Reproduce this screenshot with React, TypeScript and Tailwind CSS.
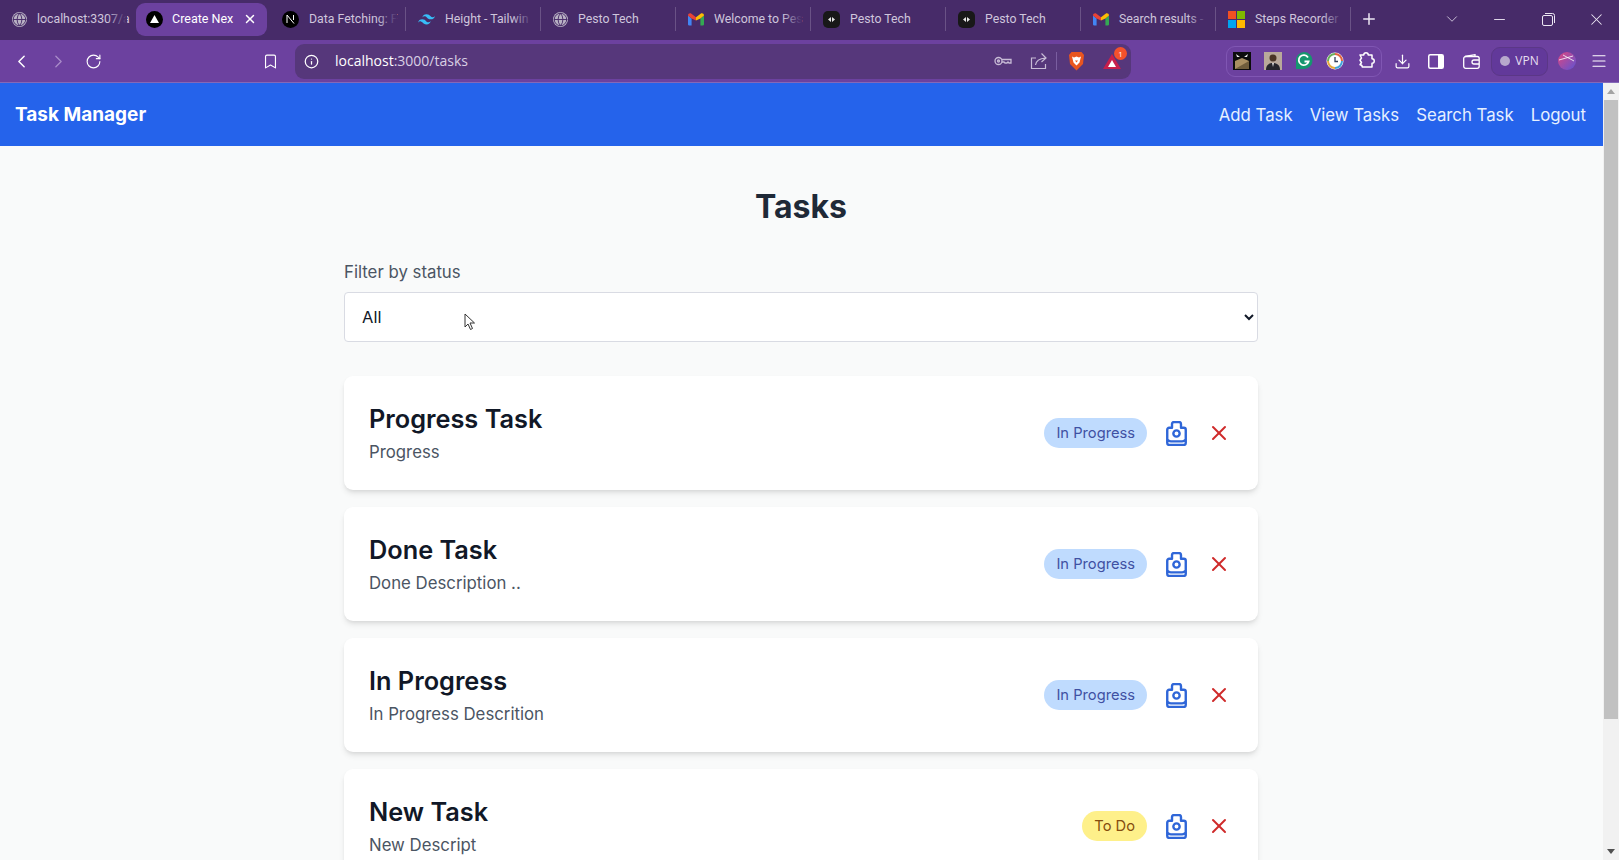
import React from 'react'
import { ChevronLeft, ChevronRight, ChevronDown, RotateCw, Bookmark, Info, X, Plus, Minus, Download, Menu, Globe } from 'lucide-react'

const Gmail = () => (
  <svg width="16" height="13" viewBox="0 0 16 13" className="shrink-0">
    <path d="M0 2.500v9A1.200 1.200 0 0 0 1.200 12.600H3.600V5.600z" fill="#4285f4" />
    <path d="M16 2.500v9a1.200 1.200 0 0 1-1.200 1.100h-2.400V5.600z" fill="#34a853" />
    <path d="M3.600 5.600 0 2.500C0 .6 2 -.4 3.400.7L8 4.200v3.400z" fill="#ea4335" />
    <path d="M12.400 5.600 16 2.500c0-1.900-2-2.900-3.400-1.800L8 4.200v3.400z" fill="#fbbc04" />
  </svg>
)

const Pesto = () => (
  <div className="w-[17px] h-[17px] rounded-[5px] bg-[#181818] flex items-center justify-center shrink-0">
    <svg width="9" height="7" viewBox="0 0 9 7">
      <path d="M4 1 1 3.500 4 6zM5 1l3 2.500L5 6z" fill="#e5e5e5" />
    </svg>
  </div>
)

const Vercel = () => (
  <div className="w-[17px] h-[17px] rounded-full bg-black flex items-center justify-center shrink-0">
    <svg width="9" height="8" viewBox="0 0 9 8"><path d="M4.500 0 9 8H0z" fill="#fff" /></svg>
  </div>
)

const NextLogo = () => (
  <div className="w-[17px] h-[17px] rounded-full bg-black flex items-center justify-center shrink-0">
    <svg width="9" height="10" viewBox="0 0 9 10" fill="none" stroke="#fff" strokeWidth="1"><path d="M1 9V1l7 8.500M7.500 1v5" /></svg>
  </div>
)

const TailwindLogo = () => (
  <svg width="17" height="11" viewBox="0 0 24 15" className="shrink-0">
    <path d="M12 0C8.800 0 6.800 1.600 6 4.800c1.200-1.600 2.600-2.200 4.200-1.800.9.200 1.600.9 2.300 1.600C13.700 5.800 15 7.200 18 7.200c3.200 0 5.200-1.600 6-4.800-1.200 1.600-2.600 2.200-4.200 1.800-.9-.2-1.600-.9-2.300-1.600C16.300 1.400 15 0 12 0zM6 7.200c-3.200 0-5.200 1.600-6 4.800 1.200-1.600 2.600-2.200 4.200-1.800.9.200 1.600.9 2.300 1.600 1.200 1.200 2.500 2.600 5.500 2.600 3.200 0 5.200-1.600 6-4.800-1.200 1.600-2.600 2.200-4.200 1.800-.9-.2-1.600-.9-2.300-1.600C10.300 8.600 9 7.200 6 7.200z" fill="#38bdf8" />
  </svg>
)

const Windows = () => (
  <div className="grid grid-cols-2 gap-px w-[17px] h-[17px] shrink-0">
    <div className="bg-[#f25022]" />
    <div className="bg-[#7fba00]" />
    <div className="bg-[#00a4ef]" />
    <div className="bg-[#ffb900]" />
  </div>
)

const GlobeIcon = () => (
  <div className="w-[15px] h-[15px] rounded-full bg-[#b9b2c4] flex items-center justify-center shrink-0">
    <Globe size={15} className="text-[#472b69]" strokeWidth={1.500} />
  </div>
)

const TABS = [
  { title: 'localhost:3307/a', icon: <GlobeIcon /> },
  { title: 'Create Nex', icon: <Vercel />, active: true },
  { title: 'Data Fetching: F', icon: <NextLogo /> },
  { title: 'Height - Tailwin', icon: <TailwindLogo /> },
  { title: 'Pesto Tech', icon: <GlobeIcon /> },
  { title: 'Welcome to Pes', icon: <Gmail /> },
  { title: 'Pesto Tech', icon: <Pesto /> },
  { title: 'Pesto Tech', icon: <Pesto /> },
  { title: 'Search results -', icon: <Gmail /> },
  { title: 'Steps Recorder', icon: <Windows /> },
]

const TASKS = [
  { title: 'Progress Task', desc: 'Progress', status: 'In Progress' },
  { title: 'Done Task', desc: 'Done Description ..', status: 'In Progress' },
  { title: 'In Progress', desc: 'In Progress Descrition', status: 'In Progress' },
  { title: 'New Task', desc: 'New Descript', status: 'To Do' },
]

function BrowserTabs() {
  return (
    <div className="h-[40px] bg-[#472b69] flex items-center shrink-0 pb-[2px] font-['Roboto',sans-serif]">
      {TABS.map((tab, i) => (
        <div key={i} className="w-[135px] h-full flex items-center">
          {tab.active ? (
            <div className="w-[131px] h-[33px] bg-[#6c419f] rounded-[9px] flex items-center gap-[9px] pl-[10px] pr-[10px] ml-px">
              {tab.icon}
              <span className="text-[12.500px] text-white whitespace-nowrap flex-1">{tab.title}</span>
              <X size={14} strokeWidth={2.500} className="text-white shrink-0" />
            </div>
          ) : (
            <div className={`relative w-full h-[24px] flex items-center gap-[10px] pl-[12px] pr-[10px] ${i === 2 || i === 0 ? '' : 'border-l border-[#6a5286]'}`}>
              {tab.icon}
              <span className="text-[12.300px] text-[#cfc6dc] whitespace-nowrap flex-1">{tab.title}</span>
              <div className="absolute right-[8px] top-0 bottom-0 w-[20px] bg-gradient-to-r from-transparent to-[#472b69]" />
            </div>
          )}
        </div>
      ))}
      <div className="h-[24px] border-l border-[#6a5286] w-[10px]" />
      <Plus size={18} className="text-[#ece7f3]" />
      <div className="ml-auto flex items-center">
        <ChevronDown size={18} strokeWidth={1.300} className="text-[#c9bfd6] mr-[30px]" />
        <Minus size={17} strokeWidth={1.300} className="text-[#ece7f3] mr-[34px]" />
        <svg width="13" height="13" viewBox="0 0 13 13" fill="none" stroke="#ece7f3" className="mr-[32px]">
          <rect x="0.500" y="2.500" width="10" height="10" rx="1.500" />
          <path d="M3 .5h7.500a2 2 0 0 1 2 2V10" />
        </svg>
        <X size={19} strokeWidth={1.300} className="text-[#ece7f3] mr-[13px]" />
      </div>
    </div>
  )
}

function BrowserToolbar() {
  return (
    <div className="h-[43px] bg-[#6c419f] border-b border-[#8468b8] flex items-center shrink-0 pl-[11px] font-['Open_Sans',sans-serif]">
      <ChevronLeft size={21} strokeWidth={1.700} className="text-white" />
      <ChevronRight size={21} strokeWidth={1.500} className="text-[#a98cc9] ml-[16px]" />
      <RotateCw size={17} strokeWidth={1.600} className="text-white ml-[16px]" />
      <Bookmark size={17} strokeWidth={1.600} className="text-white ml-[160px]" />
      <div className="ml-[16px] w-[836px] h-[35px] rounded-[9px] bg-[#56377b] flex items-center pl-[9px] pr-[8px]">
        <Info size={15} className="text-white" />
        <span className="ml-[16px] -mt-[2px] text-[14px] text-[#d9d0e4]"><span className="text-white">localhost</span>:3000/tasks</span>
        <div className="ml-auto flex items-center">
          <svg width="18" height="10" viewBox="0 0 18 10" fill="none" stroke="#c8bcd6" strokeWidth="1.300">
            <circle cx="4.500" cy="5" r="3.500" />
            <circle cx="4.500" cy="5" r="1" />
            <path d="M8 3.500h9v3.500h-2l-1-1-1 1h-2l-1-1H8" />
          </svg>
          <svg width="18" height="18" viewBox="0 0 18 18" fill="none" stroke="#c8bcd6" strokeWidth="1.200" className="ml-[18px]">
            <path d="M6 6H1.500v10.500h14V12" />
            <path d="M5.500 13C6 9 9 6.500 15.500 6M11.500 1.500l4.500 4.500-4.500 4" />
          </svg>
          <div className="w-px h-[18px] bg-[#7a5ea0] ml-[8px]" />
          <svg width="17" height="20" viewBox="0 0 17 20" className="ml-[11px]">
            <path d="M3.500 1h10l2.500 3-1 9-6.500 6.500L2 13 1 4z" fill="#e9551f" />
            <path d="M4 5.500l2 1 2.500-1 2.500 1 2-1-1.500 6-3 3-3-3z" fill="#fff" />
            <path d="M7 9.500h3l-1.500 2z" fill="#e9551f" />
          </svg>
          <div className="relative ml-[18px] mr-[2px]">
            <svg width="18" height="15" viewBox="0 0 18 15">
              <path d="M9 0 18 15H0z" fill="#c81e4b" />
              <path d="M9 6l4 7H5z" fill="#fff" />
            </svg>
            <div className="absolute -top-[7px] -right-[6px] w-[13px] h-[13px] rounded-full bg-[#f4512c] text-white text-[8px] leading-[13px] text-center">1</div>
          </div>
        </div>
      </div>
      <div className="ml-[95px] h-[31px] w-[156px] rounded-[9px] border border-[#8056b3] flex items-center justify-between px-[6px]">
        <svg width="18" height="18" viewBox="0 0 18 18">
          <rect width="18" height="18" fill="#0c0c0c" />
          <path d="M2 17V9l7-3 7 3v8z" fill="#a98f62" />
          <path d="M2 17 16 9v8z" fill="#6f5d3c" />
          <path d="M3 2l4 3-3 0zM15 2l-4 3 3 0z" fill="#eee" />
        </svg>
        <svg width="18" height="18" viewBox="0 0 18 18">
          <rect width="18" height="18" fill="#b9a99a" />
          <circle cx="9" cy="6" r="3.500" fill="#4a3526" />
          <path d="M2 18c0-5 3-7 7-7s7 2 7 7z" fill="#26262c" />
          <path d="M8 11h2l-1 4z" fill="#ddd" />
        </svg>
        <svg width="18" height="18" viewBox="0 0 18 18">
          <path d="M9 0a8.500 8.500 0 1 1 0 17H1v-8A8.500 8.500 0 0 1 9 0z" fill="#15966f" />
          <path d="M13 5.500a5 5 0 1 0 .6 4H9.500" fill="none" stroke="#fff" strokeWidth="1.800" />
        </svg>
        <svg width="18" height="18" viewBox="0 0 18 18" fill="none">
          <circle cx="9" cy="9" r="8.500" fill="#fff" />
          <path d="M9 2a7 7 0 0 1 7 7" stroke="#e2643f" strokeWidth="2" />
          <path d="M16 9a7 7 0 0 1-7 7" stroke="#3fa3d8" strokeWidth="2" />
          <path d="M9 16a7 7 0 0 1-7-7" stroke="#e6a83c" strokeWidth="2" />
          <path d="M2 9a7 7 0 0 1 7-7" stroke="#6cae5c" strokeWidth="2" />
          <path d="M9 5v4.500h3" stroke="#34405a" strokeWidth="1.300" />
        </svg>
        <svg width="18" height="18" viewBox="0 0 24 24" fill="none" stroke="#fff" strokeWidth="2" strokeLinejoin="round">
          <path d="M4 4h5a3 3 0 0 1 6 0h5v5a3 3 0 0 1 0 6v5H7a3 3 0 0 0-3-3l2-3-2-3 2-3z" />
        </svg>
      </div>
      <Download size={17} strokeWidth={1.700} className="text-white ml-[12px]" />
      <svg width="16" height="15" viewBox="0 0 16 15" className="ml-[17px]">
        <rect x="0.750" y="0.750" width="14.500" height="13.500" rx="1.500" fill="none" stroke="#fff" strokeWidth="1.500" />
        <rect x="10" y="1" width="5" height="13" fill="#fff" />
      </svg>
      <svg width="17" height="15" viewBox="0 0 17 15" fill="none" stroke="#fff" strokeWidth="1.300" className="ml-[19px]">
        <rect x="0.700" y="2.500" width="15.500" height="11.800" rx="2" />
        <path d="M2 2.500 12 .7v1.800M16 6h-5a2 2 0 0 0 0 4h5" />
      </svg>
      <div className="ml-[11px] w-[57px] h-[29px] shrink-0 rounded-[9px] border border-[#5b3787] bg-[#62399a] flex items-center justify-center gap-[5px]">
        <div className="w-[10px] h-[10px] rounded-full bg-[#b7a8cc]" />
        <span className="text-[12px] text-[#e6dff0]">VPN</span>
      </div>
      <svg width="18" height="18" viewBox="0 0 18 18" className="ml-[10px] shrink-0">
        <defs>
          <linearGradient id="avatar" x1="0" y1="0" x2="1" y2="1">
            <stop offset="0" stopColor="#e0457f" />
            <stop offset="1" stopColor="#5d54d4" />
          </linearGradient>
        </defs>
        <circle cx="9" cy="9" r="9" fill="url(#avatar)" />
        <path d="M1 8 15 4M5 3l11 6" stroke="#fff" strokeWidth="0.800" fill="none" />
      </svg>
      <Menu size={18} strokeWidth={1.500} className="text-white ml-[14px] shrink-0" />
    </div>
  )
}

function CameraIcon() {
  return (
    <svg width="21" height="25" viewBox="0 0 22 26" fill="none" stroke="#2f66d8" strokeWidth="2.500" strokeLinejoin="round" className="shrink-0">
      <path d="M1.300 23V9a2 2 0 0 1 2-2h3V3a2 2 0 0 1 2-2h5.400a2 2 0 0 1 2 2v4h3a2 2 0 0 1 2 2v14a2 2 0 0 1-2 2H3.300a2 2 0 0 1-2-2z" />
      <circle cx="11" cy="13" r="3.300" />
      <path d="M1.500 19.500c1 1.300 2 1.700 3.500 1.700h12c1.500 0 2.500-.4 3.500-1.700" />
    </svg>
  )
}

function TaskCard({ title, desc, status }: { title: string; desc: string; status: string }) {
  return (
    <div className="bg-white rounded-[9px] shadow-md h-[114px] shrink-0 px-[25px] flex items-center justify-between">
      <div>
        <h2 className="text-[25.300px] leading-[32px] font-semibold text-[#111827]">{title}</h2>
        <p className="text-[16.800px] leading-[24px] text-[#4b5563] mt-[5px]">{desc}</p>
      </div>
      <div className="flex items-center">
        <span className={`h-[30px] px-[12px] rounded-full text-[14.700px] leading-[30px] ${status === 'To Do' ? 'bg-[#fef08a] text-[#854d0e]' : 'bg-[#bfdbfe] text-[#3f51a3]'}`}>{status}</span>
        <div className="ml-[19px] flex items-center">
          <CameraIcon />
        </div>
        <div className="ml-[20px] mr-[2px]">
          <X size={24} strokeWidth={2} className="text-[#cf2a2a]" />
        </div>
      </div>
    </div>
  )
}

function Scrollbar() {
  return (
    <div className="w-[16px] bg-[#f1f1f1] flex flex-col items-center shrink-0">
      <div className="h-[17px] flex items-center justify-center">
        <div className="w-0 h-0 border-x-[4px] border-x-transparent border-b-[5px] border-b-[#a3a3a3]" />
      </div>
      <div className="w-[14px] h-[619px] bg-[#c1c1c1]" />
      <div className="flex-1" />
      <div className="h-[17px] flex items-center justify-center">
        <div className="w-0 h-0 border-x-[4px] border-x-transparent border-t-[5px] border-t-[#505050]" />
      </div>
    </div>
  )
}

export default function App() {
  return (
    <div className="h-screen w-full overflow-hidden flex flex-col font-['Inter',sans-serif]">
      <BrowserTabs />
      <BrowserToolbar />
      <div className="flex-1 flex min-h-0">
        <div className="flex-1 flex flex-col min-w-0 bg-[#f9fafa] overflow-hidden">
          <nav className="h-[63px] bg-[#2563eb] shrink-0 flex items-center justify-between pt-[2px] pl-[15px] pr-[17px] text-white">
            <span className="text-[19px] font-bold">Task Manager</span>
            <div className="flex items-center gap-[17px] text-[16.800px] text-[#e6f0ff]">
              <span>Add Task</span>
              <span>View Tasks</span>
              <span>Search Task</span>
              <span>Logout</span>
            </div>
          </nav>
          <main className="relative w-[914px] ml-[344px] flex flex-col">
            <h1 className="text-[32px] font-bold text-[#1f2937] text-center mt-[41px] leading-[40px]">Tasks</h1>
            <label className="text-[16.800px] leading-[24px] text-[#4b5563] mt-[33px]">Filter by status</label>
            <select className="mt-[8px] h-[50px] bg-white border border-[#d9dbe3] rounded-[4px] pl-[13px] pr-[19px] text-[16.500px] text-[#111827]">
              <option>All</option>
            </select>
            <div className="mt-[34px] flex flex-col gap-[17px]">
              {TASKS.map(t => <TaskCard key={t.title} {...t} />)}
            </div>
            <svg width="12" height="18" viewBox="0 0 12 18" className="absolute left-[120px] top-[167px]">
              <path d="M1 1v13l3-3 2.500 5.500 2-1L6 10h4.500z" fill="#fff" stroke="#333" strokeWidth="1" />
            </svg>
          </main>
        </div>
        <Scrollbar />
      </div>
    </div>
  )
}
